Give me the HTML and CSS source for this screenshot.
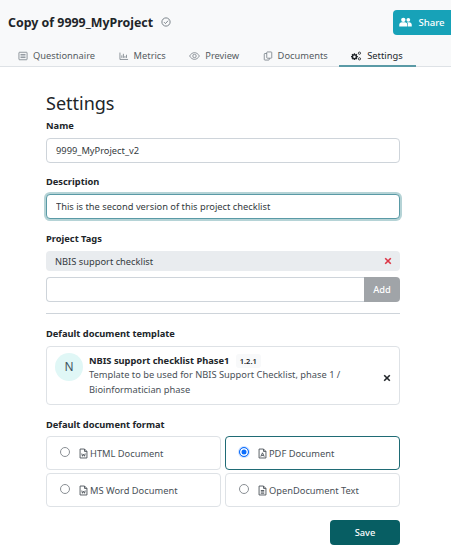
FILE: index.html
```html
<!DOCTYPE html>
<html lang="en">

<head>
  <meta charset="UTF-8">
  <meta name="viewport" content="width=device-width, initial-scale=1.0">
  <title>Settings</title>
  <link rel="stylesheet" href="styles.css">
</head>

<body>
  <div class="top">
    <div class="title-row">
      <h1 class="project-name">Copy of 9999_MyProject</h1>
      <svg class="check-icon" viewBox="0 0 16 16"><circle cx="8" cy="8" r="6.6"/><path d="M4.8 8.2l2.3 2.3 4.2-4.6"/></svg>
      <button class="share-btn">
        <svg viewBox="0 0 20 16"><circle cx="6.5" cy="4.5" r="3.5"/><circle cx="14.5" cy="4.5" r="3"/><path d="M0 15v-2.500c0-2.500 2-4 4-4h5c2 0 4 1.500 4 4V15z"/><path d="M14 15v-3c0-1.300-.5-2.500-1.500-3.500h3.500c2 0 4 1.500 4 4V15z"/></svg>
        Share
      </button>
    </div>
    <nav class="tabs">
      <a class="tab">
        <svg class="tab-icon" viewBox="0 0 16 16"><rect x="1.500" y="2" width="13" height="12" rx="1"/><path d="M4 5.500h8M4 8h8M4 10.500h8"/></svg>
        Questionnaire
      </a>
      <a class="tab">
        <svg class="tab-icon" viewBox="0 0 16 16"><path d="M1.500 2.500v11h13M4.500 11V7M7 11V4.500M9.500 11V8M12 11V6"/></svg>
        Metrics
      </a>
      <a class="tab">
        <svg class="tab-icon wide" viewBox="0 0 18 14"><path d="M1 7c2-3.500 5-5.500 8-5.500s6 2 8 5.500c-2 3.500-5 5.500-8 5.500S3 10.500 1 7z"/><circle cx="9" cy="7" r="2.800"/></svg>
        Preview
      </a>
      <a class="tab">
        <svg class="tab-icon" viewBox="0 0 16 16"><rect x="6" y="1.500" width="8" height="10" rx="1"/><path d="M6 4H3a1 1 0 0 0-1 1v8.500a1 1 0 0 0 1 1h6a1 1 0 0 0 1-1v-2"/></svg>
        Documents
      </a>
      <a class="tab active">
        <svg class="tab-icon gears" viewBox="0 0 18 16">
          <circle class="gear-big" cx="6.500" cy="9" r="3.200"/>
          <path class="gear-teeth" d="M6.500 3.500v2M6.500 12.500v2M1 9h2M10 9h2M2.600 5.100l1.400 1.400M9 11.500l1.400 1.400M2.600 12.900L4 11.500M9 6.500l1.400-1.400"/>
          <circle class="gear-small" cx="14.500" cy="3.500" r="1.800"/>
          <circle class="gear-small" cx="14.500" cy="12.500" r="1.800"/>
        </svg>
        Settings
      </a>
    </nav>
  </div>

  <form class="settings">
    <h2 class="page-title">Settings</h2>

    <label class="field-label">Name</label>
    <input class="text-input" type="text" value="9999_MyProject_v2">

    <label class="field-label gap">Description</label>
    <input class="text-input focused" type="text" value="This is the second version of this project checklist">

    <label class="field-label gap tags-label">Project Tags</label>
    <div class="tag">
      <span>NBIS support checklist</span>
      <svg class="x-icon red" viewBox="0 0 10 10"><path d="M1.500 1.500l7 7M8.500 1.500l-7 7"/></svg>
    </div>
    <div class="tag-add">
      <input class="text-input joined" type="text">
      <button class="add-btn" type="button">Add</button>
    </div>

    <hr class="divider">

    <label class="field-label">Default document template</label>
    <div class="template-card">
      <div class="avatar">N</div>
      <div class="template-info">
        <div class="template-name">NBIS support checklist Phase1 <span class="version">1.2.1</span></div>
        <div class="template-desc">Template to be used for NBIS Support Checklist, phase 1 / Bioinformatician phase</div>
      </div>
      <svg class="x-icon dark" viewBox="0 0 10 10"><path d="M1.500 1.500l7 7M8.500 1.500l-7 7"/></svg>
    </div>

    <label class="field-label format-label">Default document format</label>
    <div class="formats">
      <label class="format">
        <span class="radio"></span>
        <svg class="doc-icon" viewBox="0 0 12 16"><path d="M1 1.500h6.500L11 5v9.500H1z"/><path d="M7.500 1.500V5H11M3.500 8l1 4 1.500-3 1.500 3 1-4"/></svg>
        HTML Document
      </label>
      <label class="format selected">
        <span class="radio on"></span>
        <svg class="doc-icon" viewBox="0 0 12 16"><path d="M1 1.500h6.500L11 5v9.500H1z"/><path d="M7.500 1.500V5H11M3.500 12.500L6 7l2.500 5.500M4.500 10.800h3"/></svg>
        PDF Document
      </label>
      <label class="format">
        <span class="radio"></span>
        <svg class="doc-icon" viewBox="0 0 12 16"><path d="M1 1.500h6.500L11 5v9.500H1z"/><path d="M7.500 1.500V5H11M3.500 8l1 4 1.500-3 1.500 3 1-4"/></svg>
        MS Word Document
      </label>
      <label class="format">
        <span class="radio"></span>
        <svg class="doc-icon" viewBox="0 0 12 16"><path d="M1 1.500h6.500L11 5v9.500H1z"/><path d="M7.500 1.500V5H11M3.500 8h5M3.500 10h5M3.500 12h5"/></svg>
        OpenDocument Text
      </label>
    </div>

    <div class="actions">
      <button class="save-btn" type="button">Save</button>
    </div>
  </form>
</body>

</html>
```

FILE: styles.css
```css
* {
  box-sizing: border-box;
}

body {
  margin: 0;
  background-color: #fff;
  color: #212529;
  font-family: 'Noto Sans', sans-serif;
  font-size: 9.3px;
  overflow: hidden;
}

.top {
  background-color: #f8f9fa;
  border-bottom: 1px solid #dee2e6;
  height: 67px;
}

.title-row {
  display: flex;
  align-items: center;
  height: 44px;
  padding-left: 8px;
}

.project-name {
  margin: 0;
  font-size: 12.4px;
  font-weight: 700;
  color: #212529;
}

.check-icon {
  width: 10px;
  height: 10px;
  margin-left: 8px;
  fill: none;
  stroke: #6c757d;
  stroke-width: 1.4;
}

.share-btn {
  margin-left: auto;
  width: 58px;
  height: 25px;
  padding-left: 6px;
  border: none;
  border-radius: 4px 0 0 4px;
  background-color: #17a2b8;
  color: #fff;
  font-family: inherit;
  font-size: 9.6px;
  font-weight: 500;
  display: flex;
  align-items: center;
  justify-content: center;
  gap: 6px;
}

.share-btn svg {
  width: 13px;
  height: 10px;
  fill: #fff;
}

.tabs {
  display: flex;
  height: 23px;
  padding-left: 18px;
}

.tab {
  display: flex;
  align-items: center;
  gap: 5px;
  height: 23px;
  margin-right: 23.500px;
  color: #555b61;
  font-size: 9.3px;
}

.tab.active {
  color: #212529;
  margin-right: 0;
  margin-left: -12px;
  padding: 2px 13px 0 11px;
  border-bottom: 2px solid #5a9aa6;
}

.tab-icon {
  width: 10px;
  height: 10px;
  fill: none;
  stroke: #6c757d;
  stroke-width: 1.2;
}

.tab-icon.wide {
  width: 11px;
}

.tab-icon.gears {
  width: 12px;
}

.gear-big {
  fill: none;
  stroke: #212529;
  stroke-width: 2.400;
}

.gear-teeth {
  stroke: #212529;
  stroke-width: 2;
}

.gear-small {
  stroke: #212529;
  stroke-width: 1.4;
}

.settings {
  width: 354px;
  margin-left: 46px;
}

.page-title {
  margin: 23px 0 0;
  font-size: 18px;
  font-weight: 400;
  line-height: 26px;
}

.field-label {
  display: block;
  font-size: 9.3px;
  font-weight: 700;
  line-height: 14px;
  margin-top: 3px;
  margin-bottom: 5px;
}

.field-label.gap {
  margin-top: 12px;
}

.field-label.tags-label {
  margin-top: 13px;
  margin-bottom: 6px;
}

.text-input {
  display: block;
  width: 100%;
  height: 25px;
  padding: 0 9px;
  border: 1px solid #ced4da;
  border-radius: 4px;
  background-color: #fff;
  color: #343a40;
  font-family: inherit;
  font-size: 9.3px;
  outline: none;
}

.text-input.focused {
  border-color: #5a9aa6;
  box-shadow: 0 0 0 2px #b5d3d6;
}

.tag {
  display: flex;
  align-items: center;
  justify-content: space-between;
  height: 20px;
  padding: 0 8px 0 9px;
  margin-top: -1px;
  border-radius: 4px;
  background-color: #e9ecef;
  color: #343a40;
}

.x-icon {
  width: 8px;
  height: 8px;
  fill: none;
  stroke-width: 2;
}

.x-icon.red {
  stroke: #dc3545;
}

.x-icon.dark {
  stroke: #212529;
  margin-top: 5px;
}

.tag-add {
  display: flex;
  margin-top: 6px;
}

.text-input.joined {
  flex: 1;
  border-radius: 4px 0 0 4px;
  border-right: none;
}

.add-btn {
  width: 36px;
  height: 25px;
  border: none;
  border-radius: 0 4px 4px 0;
  background-color: #a0a4a8;
  color: #fff;
  font-family: inherit;
  font-size: 9.3px;
  font-weight: 500;
}

.divider {
  margin: 11px 0 13px;
  border: none;
  border-top: 1px solid #ced4da;
}

.template-card {
  display: flex;
  align-items: center;
  height: 59px;
  padding: 0 8px 0 8px;
  border: 1px solid #dee2e6;
  border-radius: 4px;
}

.avatar {
  flex: none;
  width: 28px;
  height: 28px;
  margin-right: 6px;
  margin-top: -18px;
  border-radius: 50%;
  background-color: #e0f7f6;
  color: #3f5560;
  font-size: 12px;
  display: flex;
  align-items: center;
  justify-content: center;
}

.template-info {
  flex: 1;
  line-height: 14.500px;
}

.template-name {
  font-weight: 700;
}

.version {
  display: inline-block;
  margin-left: 4px;
  padding: 0 4px;
  border-radius: 3px;
  background-color: #f8f9fa;
  font-size: 7.5px;
  font-weight: 600;
}

.template-desc {
  color: #495057;
  width: 270px;
}

.field-label.format-label {
  margin-top: 13px;
  margin-bottom: 4px;
}

.formats {
  display: grid;
  grid-template-columns: 175px 175px;
  column-gap: 4px;
  row-gap: 3px;
}

.format {
  display: flex;
  align-items: center;
  height: 34px;
  padding-left: 13px;
  border: 1px solid #dee2e6;
  border-radius: 4px;
  color: #495057;
  font-size: 9.3px;
}

.format.selected {
  border-color: #1f6b75;
}

.radio {
  flex: none;
  width: 10px;
  height: 10px;
  margin-right: 9px;
  margin-top: -3px;
  border: 1px solid #8a8f94;
  border-radius: 50%;
  background-color: #fff;
}

.radio.on {
  border-color: #0d6efd;
  background-color: #0d6efd;
  box-shadow: inset 0 0 0 1.500px #fff, 0 0 0 1px #cfe2ff;
}

.doc-icon {
  flex: none;
  width: 9px;
  height: 11px;
  margin-right: 2px;
  fill: none;
  stroke: #495057;
  stroke-width: 1.3;
}

.actions {
  display: flex;
  justify-content: flex-end;
  margin-top: 13px;
}

.save-btn {
  width: 70px;
  height: 25px;
  border: none;
  border-radius: 4px;
  background-color: #075e63;
  color: #fff;
  font-family: inherit;
  font-size: 9.3px;
  font-weight: 500;
}
```
